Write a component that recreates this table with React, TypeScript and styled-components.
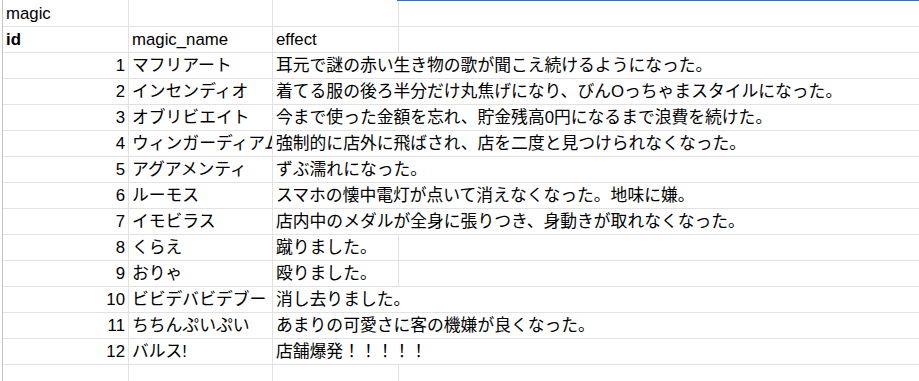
import React from "react";
import styled, { createGlobalStyle } from "styled-components";

type Magic = {
  id: number;
  name: string;
  effect: string;
};

const MAGICS: Magic[] = [
  { id: 1, name: "マフリアート", effect: "耳元で謎の赤い生き物の歌が聞こえ続けるようになった。" },
  { id: 2, name: "インセンディオ", effect: "着てる服の後ろ半分だけ丸焦げになり、びんOっちゃまスタイルになった。" },
  { id: 3, name: "オブリビエイト", effect: "今まで使った金額を忘れ、貯金残高0円になるまで浪費を続けた。" },
  { id: 4, name: "ウィンガーディアムレヴィオーサ", effect: "強制的に店外に飛ばされ、店を二度と見つけられなくなった。" },
  { id: 5, name: "アグアメンティ", effect: "ずぶ濡れになった。" },
  { id: 6, name: "ルーモス", effect: "スマホの懐中電灯が点いて消えなくなった。地味に嫌。" },
  { id: 7, name: "イモビラス", effect: "店内中のメダルが全身に張りつき、身動きが取れなくなった。" },
  { id: 8, name: "くらえ", effect: "蹴りました。" },
  { id: 9, name: "おりゃ", effect: "殴りました。" },
  { id: 10, name: "ビビデバビデブー", effect: "消し去りました。" },
  { id: 11, name: "ちちんぷいぷい", effect: "あまりの可愛さに客の機嫌が良くなった。" },
  { id: 12, name: "バルス!", effect: "店舗爆発！！！！！" },
];

// roughly one em per full-width glyph; wider than column C means it spills into D
const spills = (text: string) => text.length * 17 > 120;

export default function App() {
  return (
    <>
      <GlobalStyle />
      <Sheet>
        <Row $first>
          <Cell>magic</Cell>
          <Cell />
          <Cell />
          <Cell $last $selectedTop />
        </Row>
        <Row>
          <Cell $bold>id</Cell>
          <Cell>magic_name</Cell>
          <Cell>effect</Cell>
          <Cell $last />
        </Row>
        {MAGICS.map((m) => {
          const spill = spills(m.effect);
          return (
            <Row key={m.id}>
              <Cell $align="right">{m.id}</Cell>
              <Cell $clip>{m.name}</Cell>
              <Cell $spill={spill}>{m.effect}</Cell>
              {!spill && <Cell $last />}
            </Row>
          );
        })}
        <Row>
          <Cell />
          <Cell />
          <Cell />
          <Cell $last />
        </Row>
      </Sheet>
    </>
  );
}

const GlobalStyle = createGlobalStyle`
  html, body {
    margin: 0;
    padding: 0;
    background: #ffffff;
    overflow: hidden;
  }
  body {
    font-family: "Liberation Sans", Arial, "Noto Sans CJK JP", sans-serif;
    font-size: 16.8px;
    color: #000000;
  }
`;

const Sheet = styled.div`
  margin-left: 2px;
  border-left: 1px solid #c4c4c4;
  display: flex;
  flex-direction: column;
`;

const Row = styled.div<{ $first?: boolean }>`
  display: grid;
  grid-template-columns: 126px 144px 126px 1fr;
  height: ${({ $first }) => ($first ? "27px" : "26px")};
`;

const Cell = styled.div<{
  $align?: "left" | "right";
  $bold?: boolean;
  $clip?: boolean;
  $spill?: boolean;
  $last?: boolean;
  $selectedTop?: boolean;
}>`
  position: relative;
  box-sizing: border-box;
  min-width: 0;
  padding: 0 3px 1px;
  border-bottom: 1px solid #e2e2e2;
  border-right: ${({ $last, $spill }) =>
    $last || $spill ? "none" : "1px solid #e2e2e2"};
  grid-column: ${({ $spill }) => ($spill ? "3 / 5" : "auto")};
  display: flex;
  align-items: flex-end;
  justify-content: ${({ $align }) =>
    $align === "right" ? "flex-end" : "flex-start"};
  line-height: 22px;
  font-weight: ${({ $bold }) => ($bold ? 700 : 400)};
  white-space: nowrap;
  overflow: ${({ $clip }) => ($clip ? "hidden" : "visible")};

  ${({ $selectedTop }) =>
    $selectedTop &&
    `
    &::before {
      content: "";
      position: absolute;
      top: 0;
      left: -2px;
      right: 0;
      height: 1px;
      background: #1a73e8;
    }
  `}
`;
